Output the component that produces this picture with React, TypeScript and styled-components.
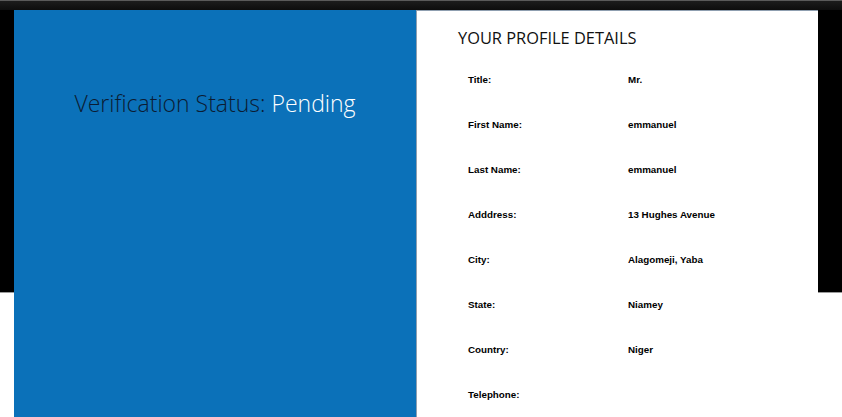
import React from "react";
import styled, { createGlobalStyle } from "styled-components";

const Global = createGlobalStyle`
  html, body { margin: 0; padding: 0; }
  body {
    width: 842px;
    height: 417px;
    overflow: hidden;
    background:
      linear-gradient(to bottom,
        #5a5a5a 0, #5a5a5a 1px,
        #1c1c1c 1px, #0d0d0d 10px,
        #000 10px, #000 292px,
        #9a9a9a 292px, #9a9a9a 293px,
        #fff 293px, #fff 100%);
  }
`;

const Page = styled.div`
  padding: 10px 0 0 14px;
  display: flex;
`;

const Card = styled.div`
  display: grid;
  grid-template-columns: 402px 402px;
  height: 407px;
`;

const StatusPanel = styled.section`
  background: #0b71b9;
  display: flex;
  justify-content: center;
  padding-top: 78px;
  box-sizing: border-box;
`;

const StatusText = styled.h2`
  margin: 0;
  font-family: "Open Sans", sans-serif;
  font-weight: 300;
  font-size: 23px;
  line-height: 30px;
  color: #0b1c33;
  white-space: nowrap;
`;

const StatusValue = styled.span`
  color: #ffffff;
`;

const DetailsPanel = styled.section`
  background: #ffffff;
  box-shadow: inset 1px 1px 0 #8f9fb0;
  padding: 17px 0 0 42px;
  box-sizing: border-box;
`;

const Heading = styled.h3`
  margin: 0 0 25px 0;
  font-family: "Open Sans", sans-serif;
  font-weight: 400;
  font-size: 16.4px;
  line-height: 22px;
  color: #111;
`;

const Rows = styled.dl`
  margin: 0;
  padding-left: 10px;
  display: grid;
  grid-template-columns: 160px 1fr;
  grid-auto-rows: 45px;
  font-family: "Liberation Sans", Arial, sans-serif;
  font-weight: 700;
  font-size: 9.8px;
  color: #000;
`;

const Label = styled.dt`
  margin: 0;
  line-height: 12px;
`;

const Value = styled.dd`
  margin: 0;
  line-height: 12px;
`;

const details: [string, string][] = [
  ["Title:", "Mr."],
  ["First Name:", "emmanuel"],
  ["Last Name:", "emmanuel"],
  ["Adddress:", "13 Hughes Avenue"],
  ["City:", "Alagomeji, Yaba"],
  ["State:", "Niamey"],
  ["Country:", "Niger"],
  ["Telephone:", ""],
];

export default function App() {
  return (
    <>
      <Global />
      <Page>
        <Card>
          <StatusPanel>
            <StatusText>
              Verification Status: <StatusValue>Pending</StatusValue>
            </StatusText>
          </StatusPanel>
          <DetailsPanel>
            <Heading>YOUR PROFILE DETAILS</Heading>
            <Rows>
              {details.map(([l, v]) => (
                <React.Fragment key={l}>
                  <Label>{l}</Label>
                  <Value>{v}</Value>
                </React.Fragment>
              ))}
            </Rows>
          </DetailsPanel>
        </Card>
      </Page>
    </>
  );
}
